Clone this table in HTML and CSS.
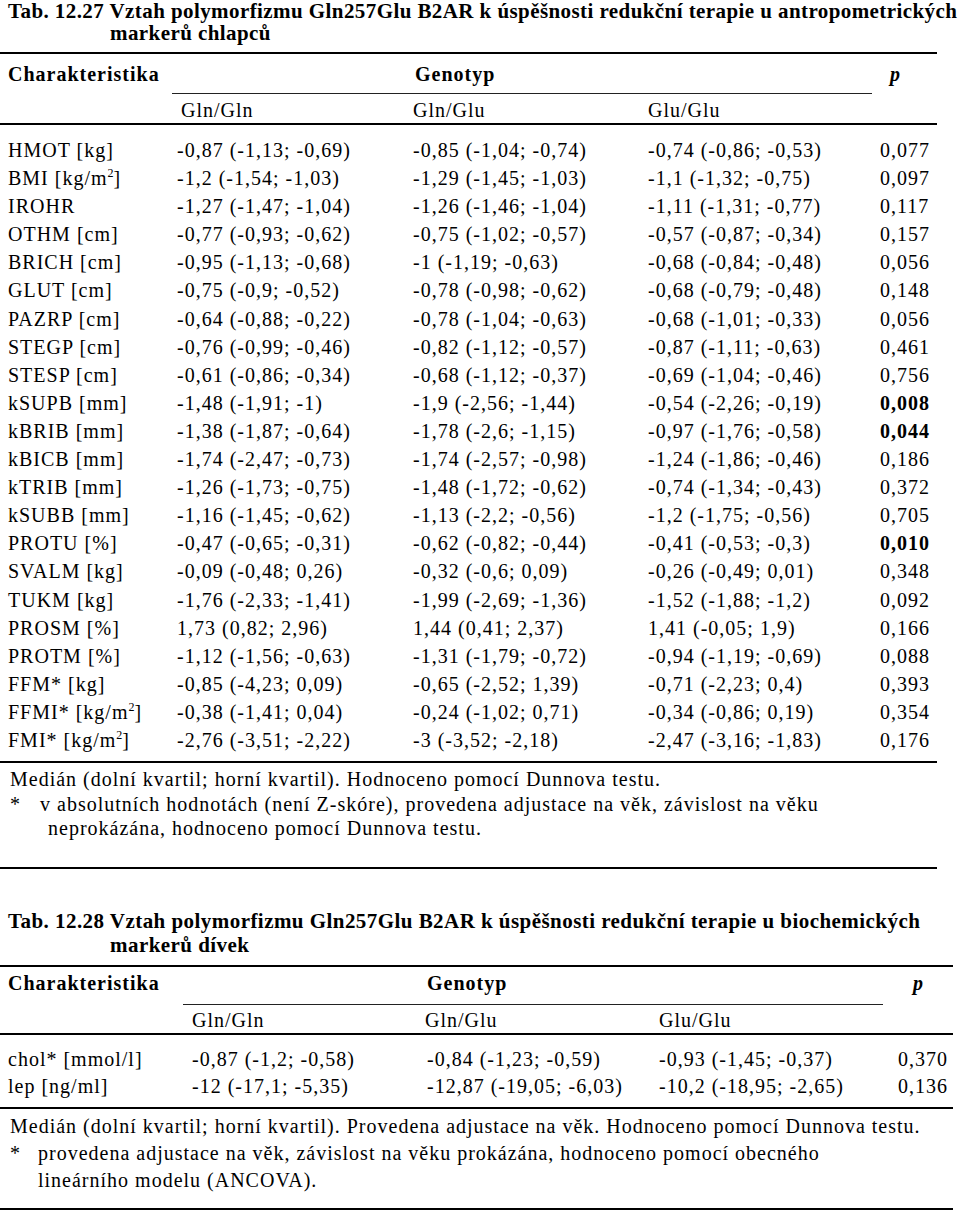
FILE: index.html
```html
<!DOCTYPE html>
<html lang="cs">
<head>
<meta charset="utf-8">
<title>Tab. 12.27 a 12.28</title>
<link rel="stylesheet" href="styles.css">
</head>
<body>
<section class="tab tab-a">
  <h2 class="caption">Tab. 12.27 Vztah polymorfizmu Gln257Glu B2AR k úspěšnosti redukční terapie u antropometrických<br>markerů chlapců</h2>
  <table class="data">
    <colgroup>
      <col class="w0"><col class="w1"><col class="w2"><col class="w3"><col class="w4">
    </colgroup>
    <thead>
      <tr class="hr1">
        <th class="lab">Charakteristika</th>
        <th class="geno" colspan="3">Genotyp</th>
        <th class="pval">p</th>
      </tr>
      <tr class="hr2">
        <th class="lab"></th>
        <th class="c1 g1">Gln/Gln</th>
        <th class="c2">Gln/Glu</th>
        <th class="c3">Glu/Glu</th>
        <th class="c4"></th>
      </tr>
    </thead>
    <tbody>
      <tr><td class="lab">HMOT [kg]</td><td class="c1">-0,87 (-1,13; -0,69)</td><td class="c2">-0,85 (-1,04; -0,74)</td><td class="c3">-0,74 (-0,86; -0,53)</td><td class="c4">0,077</td></tr>
      <tr><td class="lab">BMI [kg/m<sup>2</sup>]</td><td class="c1">-1,2 (-1,54; -1,03)</td><td class="c2">-1,29 (-1,45; -1,03)</td><td class="c3">-1,1 (-1,32; -0,75)</td><td class="c4">0,097</td></tr>
      <tr><td class="lab">IROHR</td><td class="c1">-1,27 (-1,47; -1,04)</td><td class="c2">-1,26 (-1,46; -1,04)</td><td class="c3">-1,11 (-1,31; -0,77)</td><td class="c4">0,117</td></tr>
      <tr><td class="lab">OTHM [cm]</td><td class="c1">-0,77 (-0,93; -0,62)</td><td class="c2">-0,75 (-1,02; -0,57)</td><td class="c3">-0,57 (-0,87; -0,34)</td><td class="c4">0,157</td></tr>
      <tr><td class="lab">BRICH [cm]</td><td class="c1">-0,95 (-1,13; -0,68)</td><td class="c2">-1 (-1,19; -0,63)</td><td class="c3">-0,68 (-0,84; -0,48)</td><td class="c4">0,056</td></tr>
      <tr><td class="lab">GLUT [cm]</td><td class="c1">-0,75 (-0,9; -0,52)</td><td class="c2">-0,78 (-0,98; -0,62)</td><td class="c3">-0,68 (-0,79; -0,48)</td><td class="c4">0,148</td></tr>
      <tr><td class="lab">PAZRP [cm]</td><td class="c1">-0,64 (-0,88; -0,22)</td><td class="c2">-0,78 (-1,04; -0,63)</td><td class="c3">-0,68 (-1,01; -0,33)</td><td class="c4">0,056</td></tr>
      <tr><td class="lab">STEGP [cm]</td><td class="c1">-0,76 (-0,99; -0,46)</td><td class="c2">-0,82 (-1,12; -0,57)</td><td class="c3">-0,87 (-1,11; -0,63)</td><td class="c4">0,461</td></tr>
      <tr><td class="lab">STESP [cm]</td><td class="c1">-0,61 (-0,86; -0,34)</td><td class="c2">-0,68 (-1,12; -0,37)</td><td class="c3">-0,69 (-1,04; -0,46)</td><td class="c4">0,756</td></tr>
      <tr><td class="lab">kSUPB [mm]</td><td class="c1">-1,48 (-1,91; -1)</td><td class="c2">-1,9 (-2,56; -1,44)</td><td class="c3">-0,54 (-2,26; -0,19)</td><td class="c4 sig">0,008</td></tr>
      <tr><td class="lab">kBRIB [mm]</td><td class="c1">-1,38 (-1,87; -0,64)</td><td class="c2">-1,78 (-2,6; -1,15)</td><td class="c3">-0,97 (-1,76; -0,58)</td><td class="c4 sig">0,044</td></tr>
      <tr><td class="lab">kBICB [mm]</td><td class="c1">-1,74 (-2,47; -0,73)</td><td class="c2">-1,74 (-2,57; -0,98)</td><td class="c3">-1,24 (-1,86; -0,46)</td><td class="c4">0,186</td></tr>
      <tr><td class="lab">kTRIB [mm]</td><td class="c1">-1,26 (-1,73; -0,75)</td><td class="c2">-1,48 (-1,72; -0,62)</td><td class="c3">-0,74 (-1,34; -0,43)</td><td class="c4">0,372</td></tr>
      <tr><td class="lab">kSUBB [mm]</td><td class="c1">-1,16 (-1,45; -0,62)</td><td class="c2">-1,13 (-2,2; -0,56)</td><td class="c3">-1,2 (-1,75; -0,56)</td><td class="c4">0,705</td></tr>
      <tr><td class="lab">PROTU [%]</td><td class="c1">-0,47 (-0,65; -0,31)</td><td class="c2">-0,62 (-0,82; -0,44)</td><td class="c3">-0,41 (-0,53; -0,3)</td><td class="c4 sig">0,010</td></tr>
      <tr><td class="lab">SVALM [kg]</td><td class="c1">-0,09 (-0,48; 0,26)</td><td class="c2">-0,32 (-0,6; 0,09)</td><td class="c3">-0,26 (-0,49; 0,01)</td><td class="c4">0,348</td></tr>
      <tr><td class="lab">TUKM [kg]</td><td class="c1">-1,76 (-2,33; -1,41)</td><td class="c2">-1,99 (-2,69; -1,36)</td><td class="c3">-1,52 (-1,88; -1,2)</td><td class="c4">0,092</td></tr>
      <tr><td class="lab">PROSM [%]</td><td class="c1">1,73 (0,82; 2,96)</td><td class="c2">1,44 (0,41; 2,37)</td><td class="c3">1,41 (-0,05; 1,9)</td><td class="c4">0,166</td></tr>
      <tr><td class="lab">PROTM [%]</td><td class="c1">-1,12 (-1,56; -0,63)</td><td class="c2">-1,31 (-1,79; -0,72)</td><td class="c3">-0,94 (-1,19; -0,69)</td><td class="c4">0,088</td></tr>
      <tr><td class="lab">FFM* [kg]</td><td class="c1">-0,85 (-4,23; 0,09)</td><td class="c2">-0,65 (-2,52; 1,39)</td><td class="c3">-0,71 (-2,23; 0,4)</td><td class="c4">0,393</td></tr>
      <tr><td class="lab">FFMI* [kg/m<sup>2</sup>]</td><td class="c1">-0,38 (-1,41; 0,04)</td><td class="c2">-0,24 (-1,02; 0,71)</td><td class="c3">-0,34 (-0,86; 0,19)</td><td class="c4">0,354</td></tr>
      <tr><td class="lab">FMI* [kg/m<sup>2</sup>]</td><td class="c1">-2,76 (-3,51; -2,22)</td><td class="c2">-3 (-3,52; -2,18)</td><td class="c3">-2,47 (-3,16; -1,83)</td><td class="c4">0,176</td></tr>
    </tbody>
  </table>
  <div class="notes">
    <p class="note-main">Medián (dolní kvartil; horní kvartil). Hodnoceno pomocí Dunnova testu.</p>
    <div class="note-star">
      <span class="star">*</span>
      <p class="star-text">v absolutních hodnotách (není Z-skóre), provedena adjustace na věk, závislost na věku<br>neprokázána, hodnoceno pomocí Dunnova testu.</p>
    </div>
  </div>
</section>

<section class="tab tab-b">
  <h2 class="caption">Tab. 12.28 Vztah polymorfizmu Gln257Glu B2AR k úspěšnosti redukční terapie u biochemických<br>markerů dívek</h2>
  <table class="data">
    <colgroup>
      <col class="w0"><col class="w1"><col class="w2"><col class="w3"><col class="w4">
    </colgroup>
    <thead>
      <tr class="hr1">
        <th class="lab">Charakteristika</th>
        <th class="geno" colspan="3">Genotyp</th>
        <th class="pval">p</th>
      </tr>
      <tr class="hr2">
        <th class="lab"></th>
        <th class="c1">Gln/Gln</th>
        <th class="c2 g2">Gln/Glu</th>
        <th class="c3">Glu/Glu</th>
        <th class="c4"></th>
      </tr>
    </thead>
    <tbody>
      <tr><td class="lab">chol* [mmol/l]</td><td class="c1">-0,87 (-1,2; -0,58)</td><td class="c2">-0,84 (-1,23; -0,59)</td><td class="c3">-0,93 (-1,45; -0,37)</td><td class="c4">0,370</td></tr>
      <tr><td class="lab">lep [ng/ml]</td><td class="c1">-12 (-17,1; -5,35)</td><td class="c2">-12,87 (-19,05; -6,03)</td><td class="c3">-10,2 (-18,95; -2,65)</td><td class="c4">0,136</td></tr>
    </tbody>
  </table>
  <div class="notes">
    <p class="note-main">Medián (dolní kvartil; horní kvartil). Provedena adjustace na věk. Hodnoceno pomocí Dunnova testu.</p>
    <div class="note-star">
      <span class="star">*</span>
      <p class="star-text">provedena adjustace na věk, závislost na věku prokázána, hodnoceno pomocí obecného<br>lineárního modelu (ANCOVA).</p>
    </div>
  </div>
</section>
</body>
</html>
```

FILE: styles.css
```css
* {
  box-sizing: border-box;
}

html, body {
  margin: 0;
  padding: 0;
  background: #ffffff;
}

body {
  width: 960px;
  font-family: "Liberation Serif", "Times New Roman", serif;
  font-size: 20px;
  letter-spacing: 1px;
  color: #000000;
}

.caption {
  margin: 0 0 8px 0;
  padding-left: 110px;
  text-indent: -102px;
  font-size: 21px;
  font-weight: bold;
  line-height: 22px;
  letter-spacing: 0.42px;
  white-space: nowrap;
}

.tab-b {
  margin-top: 40px;
}

.tab-b .caption {
  line-height: 24px;
  letter-spacing: 0.45px;
}

.data {
  border-collapse: separate;
  border-spacing: 0;
  table-layout: fixed;
  border-top: 2px solid #000000;
}

.tab-a .data { width: 937px; }
.tab-b .data { width: 953px; }

.data th,
.data td {
  padding: 0;
  text-align: left;
  white-space: nowrap;
  vertical-align: top;
}

.data th {
  font-weight: normal;
}

/* column widths */
.tab-a .w0 { width: 172px; }
.tab-a .w1 { width: 236px; }
.tab-a .w2 { width: 235px; }
.tab-a .w3 { width: 229px; }
.tab-a .w4 { width: 65px; }

.tab-b .w0 { width: 183px; }
.tab-b .w1 { width: 237px; }
.tab-b .w2 { width: 234px; }
.tab-b .w3 { width: 229px; }
.tab-b .w4 { width: 70px; }

/* cell insets */
.lab { padding-left: 8px !important; }

.tab-a .c1, .tab-a .c2, .tab-a .c3 { padding-left: 5px !important; }
.tab-a .c4 { padding-left: 8px !important; }
.tab-a .g1 { padding-left: 9px !important; }

.tab-b .c1 { padding-left: 9px !important; }
.tab-b .c2 { padding-left: 7px !important; }
.tab-b .g2 { padding-left: 5px !important; }
.tab-b .c3 { padding-left: 5px !important; }
.tab-b .c4 { padding-left: 15px !important; }

/* header row 1 */
.hr1 th {
  font-weight: bold;
  line-height: 28px;
}

.tab-a .hr1 th { padding-top: 6px; padding-bottom: 5px; }
.tab-b .hr1 th { padding-top: 2px; padding-bottom: 7px; }

.geno {
  border-bottom: 1px solid #222222;
}

.tab-a .geno { padding-left: 243px !important; }
.tab-b .geno { padding-left: 244px !important; }

.pval {
  font-style: italic;
}

.tab-a .pval { padding-left: 18px !important; }
.tab-b .pval { padding-left: 30px !important; }

/* header row 2 */
.hr2 th {
  border-bottom: 2px solid #000000;
}

.tab-a .hr2 th { line-height: 26px; padding-top: 3px; }
.tab-b .hr2 th { line-height: 25px; padding-top: 3px; }

/* body rows */
.tab-a tbody td { line-height: 28.1px; }
.tab-a tbody tr:first-child td { padding-top: 11px; }
.tab-a tbody tr:last-child td { padding-bottom: 7px; }

.tab-b tbody td { line-height: 27px; }
.tab-b tbody tr:first-child td { padding-top: 11px; }
.tab-b tbody tr:last-child td { padding-bottom: 7px; }

tbody tr:last-child td {
  border-bottom: 2px solid #000000;
}

.sig {
  font-weight: bold;
}

sup {
  font-size: 12px;
  line-height: 0;
  vertical-align: 8px;
  letter-spacing: 0;
}

/* notes */
.notes {
  padding-left: 10px;
  border-bottom: 2px solid #000000;
}

.tab-a .notes {
  width: 937px;
  padding-top: 4px;
  padding-bottom: 26px;
  line-height: 24.5px;
}

.tab-b .notes {
  width: 953px;
  padding-top: 4px;
  padding-bottom: 14px;
  line-height: 27px;
}

.notes p {
  margin: 0;
}

.note-star {
  display: flex;
}

.star {
  flex: 0 0 auto;
}

.tab-a .star { width: 30px; }
.tab-b .star { width: 28px; }

.tab-a .star-text {
  padding-left: 8px;
  text-indent: -8px;
}
```
